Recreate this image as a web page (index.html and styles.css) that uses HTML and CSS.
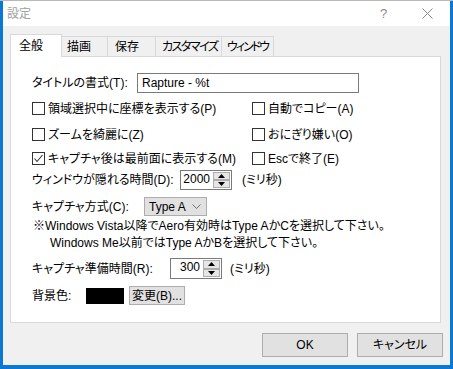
FILE: index.html
```html
<!DOCTYPE html>
<html lang="ja">
<head>
<meta charset="utf-8">
<title>設定</title>
<link rel="stylesheet" href="styles.css">
</head>
<body>
<div class="window">
  <div class="titlebar">
    <span class="title">設定</span>
    <span class="tb-btn help">?</span>
    <span class="tb-btn close"><svg width="11" height="11" viewBox="0 0 11 11"><path d="M0.5 0.5 L10.5 10.5 M10.5 0.5 L0.5 10.5" stroke="#8a8a8a" stroke-width="1" fill="none"/></svg></span>
  </div>
  <div class="client">
    <div class="tabs">
      <div class="tab tab-sel tab-1">全般</div>
      <div class="tab tab-2">描画</div>
      <div class="tab tab-3">保存</div>
      <div class="tab tab-4">カスタマイズ</div>
      <div class="tab tab-5">ウィンドウ</div>
    </div>
    <div class="panel">
      <div class="row row-a">
        <span class="label lw-title">タイトルの書式(T):</span>
        <div class="textfield">Rapture - %t</div>
      </div>
      <div class="row row-b">
        <label class="check col-left"><span class="box"></span><span>領域選択中に座標を表示する(P)</span></label>
        <label class="check"><span class="box"></span><span>自動でコピー(A)</span></label>
      </div>
      <div class="row row-c">
        <label class="check col-left"><span class="box"></span><span>ズームを綺麗に(Z)</span></label>
        <label class="check"><span class="box"></span><span>おにぎり嫌い(O)</span></label>
      </div>
      <div class="row row-d">
        <label class="check col-left"><span class="box checked"><svg width="11" height="11" viewBox="0 0 11 11"><path d="M1.5 5.5 L4 8.5 L9.5 2" stroke="#333" stroke-width="1.1" fill="none"/></svg></span><span>キャプチャ後は最前面に表示する(M)</span></label>
        <label class="check"><span class="box"></span><span>Escで終了(E)</span></label>
      </div>
      <div class="row row-e">
        <span class="label lw-hide">ウィンドウが隠れる時間(D):</span>
        <div class="spin">
          <span class="spin-val">2000</span>
          <span class="spin-btns">
            <span class="spin-btn"><svg width="7" height="4" viewBox="0 0 7 4"><path d="M0 4 L3.5 0 L7 4 Z" fill="#000"/></svg></span>
            <span class="spin-btn"><svg width="7" height="4" viewBox="0 0 7 4"><path d="M0 0 L3.5 4 L7 0 Z" fill="#000"/></svg></span>
          </span>
        </div>
        <span class="unit">(ミリ秒)</span>
      </div>
      <div class="row row-f">
        <span class="label lw-method">キャプチャ方式(C):</span>
        <div class="combo">
          <span class="combo-val">Type A</span>
          <svg class="chev" width="9" height="5" viewBox="0 0 9 5"><path d="M0.5 0.5 L4.5 4.5 L8.5 0.5" stroke="#707070" stroke-width="1" fill="none"/></svg>
        </div>
      </div>
      <div class="note note-1">※Windows Vista以降でAero有効時はType AかCを選択して下さい。</div>
      <div class="note note-2">Windows Me以前ではType AかBを選択して下さい。</div>
      <div class="row row-g">
        <span class="label lw-prep">キャプチャ準備時間(R):</span>
        <div class="spin">
          <span class="spin-val">300</span>
          <span class="spin-btns">
            <span class="spin-btn"><svg width="7" height="4" viewBox="0 0 7 4"><path d="M0 4 L3.5 0 L7 4 Z" fill="#000"/></svg></span>
            <span class="spin-btn"><svg width="7" height="4" viewBox="0 0 7 4"><path d="M0 0 L3.5 4 L7 0 Z" fill="#000"/></svg></span>
          </span>
        </div>
        <span class="unit">(ミリ秒)</span>
      </div>
      <div class="row row-h">
        <span class="label lw-bg">背景色:</span>
        <span class="swatch"></span>
        <span class="btn btn-small">変更(B)...</span>
      </div>
    </div>
    <div class="buttons">
      <span class="btn btn-dlg">OK</span>
      <span class="btn btn-dlg">キャンセル</span>
    </div>
  </div>
</div>
</body>
</html>
```

FILE: styles.css
```css
* { box-sizing: border-box; }
html, body { margin: 0; padding: 0; }
body {
  width: 453px;
  height: 369px;
  overflow: hidden;
  background: linear-gradient(#b9b9b9 0 1px, #0b79d3 1px);
  font-family: "Liberation Sans", "Noto Sans CJK JP", sans-serif;
  font-size: 12px;
  line-height: 16px;
  color: #000;
  font-feature-settings: "palt";
}
.window {
  margin: 1px 0 0 3px;
  width: 447px;
  height: 364px;
  background: #f0f0f0;
  display: flex;
  flex-direction: column;
}
.titlebar {
  height: 25px;
  background: #fff;
  display: flex;
  align-items: center;
}
.title {
  flex: 1;
  padding-left: 4px;
  color: #a0a0a0;
}
.tb-btn {
  width: 46px;
  height: 25px;
  display: flex;
  align-items: center;
  justify-content: center;
  color: #8a8a8a;
  font-size: 13px;
}
.help { padding-left: 5px; }
.close { padding-left: 0; }
.client {
  flex: 1;
  padding: 8px 0 0 7px;
  display: flex;
  flex-direction: column;
}
.tabs {
  height: 22px;
  display: flex;
  align-items: flex-end;
  position: relative;
  z-index: 1;
}
.tab {
  height: 20px;
  border: 1px solid #d9d9d9;
  border-bottom: none;
  background: #f0f0f0;
  padding-top: 2px;
  margin-left: -1px;
  white-space: nowrap;
  overflow: hidden;
}
.tab-sel {
  height: 23px;
  margin-bottom: -1px;
  background: #fff;
  margin-left: 0;
  padding-top: 3px;
  position: relative;
  z-index: 2;
}
.tab-1 { width: 52px; padding-left: 8px; }
.tab-2 { width: 47px; padding-left: 5px; }
.tab-3 { width: 49px; padding-left: 7px; }
.tab-4 { width: 67px; padding-left: 6px; letter-spacing: -1.5px; }
.tab-5 { width: 53px; padding-left: 5px; letter-spacing: -2px; }
.panel {
  width: 431px;
  height: 267px;
  background: #fff;
  border: 1px solid #d9d9d9;
  padding: 0 0 0 21px;
  display: flex;
  flex-direction: column;
}
.row {
  display: flex;
  align-items: center;
  flex: none;
}
.row-a { margin-top: 16px; height: 20px; }
.row-b { margin-top: 5px; height: 21px; }
.row-c { margin-top: 5px; height: 21px; }
.row-d { margin-top: 3px; height: 21px; }
.row-e { margin-top: 1px; height: 20px; }
.row-f { margin-top: 7px; height: 19px; }
.row-g { margin-top: 6px; height: 21px; }
.row-h { margin-top: 7px; height: 19px; }
.label { white-space: nowrap; flex: none; }
.lw-title { width: 105px; }
.lw-hide { width: 148px; }
.lw-method { width: 112px; }
.lw-prep { width: 138px; }
.lw-bg { width: 54px; }
.textfield {
  width: 222px;
  height: 20px;
  border: 1px solid #7a7a7a;
  padding: 1px 0 0 4px;
  white-space: nowrap;
}
.check {
  display: flex;
  align-items: center;
  white-space: nowrap;
}
.col-left { width: 220px; }
.box {
  width: 13px;
  height: 13px;
  border: 1px solid #333;
  background: #fff;
  margin-right: 3px;
  display: flex;
  align-items: center;
  justify-content: center;
  flex: none;
}
.spin {
  width: 52px;
  height: 20px;
  border: 1px solid #7a7a7a;
  display: flex;
  background: #fff;
}
.row-g .spin { height: 21px; }
.spin-val {
  flex: 1;
  text-align: right;
  padding-right: 3px;
  line-height: 17px;
}
.spin-btns {
  width: 18px;
  display: flex;
  flex-direction: column;
  padding: 1px 1px 1px 0;
}
.spin-btn {
  flex: 1;
  background: #e6e6e6;
  border: 1px solid #adadad;
  display: flex;
  align-items: center;
  justify-content: center;
}
.unit { margin-left: 10px; white-space: nowrap; }
.row-g .unit { margin-left: 8px; }
.combo {
  width: 63px;
  height: 19px;
  background: #e1e1e1;
  border: 1px solid #adadad;
  display: flex;
  align-items: center;
  padding-left: 4px;
}
.combo-val { flex: 1; white-space: nowrap; }
.chev { margin-right: 5px; }
.note {
  white-space: nowrap;
  flex: none;
}
.note-1 { margin-top: 1px; height: 18px; line-height: 18px; padding-left: 1px; }
.note-2 { height: 17px; line-height: 17px; padding-left: 18px; }
.swatch {
  width: 38px;
  height: 16px;
  background: #000;
  margin-right: 5px;
}
.btn {
  background: #e1e1e1;
  border: 1px solid #adadad;
  display: flex;
  align-items: center;
  justify-content: center;
  white-space: nowrap;
}
.btn-small { width: 56px; height: 19px; }
.buttons {
  margin-top: 10px;
  display: flex;
  gap: 9px;
  padding-left: 252px;
}
.btn-dlg { width: 86px; height: 24px; }
```
